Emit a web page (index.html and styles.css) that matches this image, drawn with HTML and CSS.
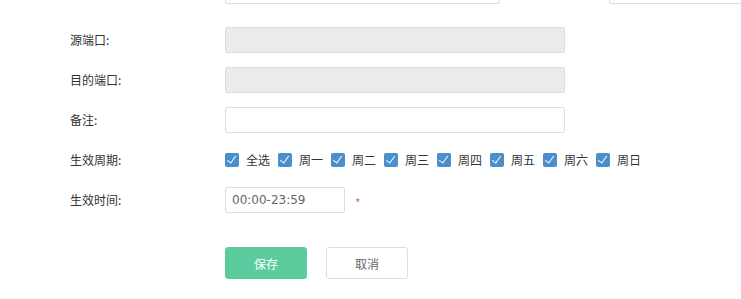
FILE: index.html
```html
<!DOCTYPE html>
<html lang="zh-CN">
<head>
    <meta charset="UTF-8">
    <title>端口规则</title>
    <link rel="stylesheet" href="styles.css">
</head>
<body>

<div class="form">
    <div class="row row-top">
        <input type="text" class="input input-top" />
        <input type="text" class="input input-side" />
    </div>

    <div class="row">
        <label class="label">源端口:</label>
        <input type="text" class="input input-wide" disabled />
    </div>

    <div class="row">
        <label class="label">目的端口:</label>
        <input type="text" class="input input-wide" disabled />
    </div>

    <div class="row">
        <label class="label">备注:</label>
        <input type="text" class="input input-wide" />
    </div>

    <div class="row row-week">
        <label class="label">生效周期:</label>
        <div class="week">
            <span class="check"><i class="box"></i>全选</span>
            <span class="check"><i class="box"></i>周一</span>
            <span class="check"><i class="box"></i>周二</span>
            <span class="check"><i class="box"></i>周三</span>
            <span class="check"><i class="box"></i>周四</span>
            <span class="check"><i class="box"></i>周五</span>
            <span class="check"><i class="box"></i>周六</span>
            <span class="check"><i class="box"></i>周日</span>
        </div>
    </div>

    <div class="row row-time">
        <label class="label">生效时间:</label>
        <input type="text" class="input input-time" value="00:00-23:59" />
        <span class="required">*</span>
    </div>

    <div class="buttons">
        <button class="btn btn-save">保存</button>
        <button class="btn btn-cancel">取消</button>
    </div>
</div>

</body>
</html>
```

FILE: styles.css
```css
body {
    margin: 0;
    background-color: #fff;
    font-family: "Noto Sans CJK SC", "Noto Sans", sans-serif;
    font-size: 12px;
    color: #333;
    overflow: hidden;
}
.form {
    margin-top: -22px;
}
.row {
    display: flex;
    align-items: center;
    height: 25px;
    margin-bottom: 15px;
}
.row-top {
    margin-bottom: 24px;
    padding-left: 225px;
}
.label {
    width: 225px;
    padding-left: 70px;
    box-sizing: border-box;
    flex-shrink: 0;
}
.input {
    box-sizing: border-box;
    flex-shrink: 0;
    height: 26px;
    border: 1px solid #ddd;
    border-radius: 2px;
    background-color: #fff;
    padding: 0 6px;
    font-family: "DejaVu Sans", sans-serif;
    font-size: 12px;
    color: #666;
    outline: none;
}
.input:disabled {
    background-color: #ebebeb;
}
.input-top {
    width: 275px;
}
.input-side {
    width: 160px;
    margin-left: 109px;
}
.input-wide {
    width: 340px;
}
.row-week {
    margin-top: 7px;
    margin-bottom: 15px;
}
.week {
    display: flex;
}
.check {
    display: flex;
    align-items: center;
    width: 53px;
    color: #333;
}
.box {
    position: relative;
    width: 14px;
    height: 14px;
    border-radius: 2px;
    background-color: #4a8ecb;
    margin-right: 7px;
}
.box::after {
    content: "";
    position: absolute;
    left: 4px;
    top: 1px;
    width: 4px;
    height: 8px;
    border: solid #fff;
    border-width: 0 1.5px 1.5px 0;
    transform: rotate(35deg);
}
.input-time {
    width: 120px;
    padding-left: 6px;
}
.required {
    margin-left: 10px;
    padding-top: 6px;
    color: #c9727e;
    font-size: 12px;
}
.buttons {
    display: flex;
    gap: 19px;
    padding-left: 225px;
    margin-top: 35px;
}
.btn {
    width: 82px;
    height: 32px;
    border-radius: 3px;
    font-family: "Noto Sans CJK SC", sans-serif;
    font-size: 12px;
    cursor: pointer;
}
.btn-save {
    background-color: #5ccb9e;
    border: 1px solid #5ccb9e;
    color: #fff;
}
.btn-cancel {
    background-color: #fff;
    border: 1px solid #ddd;
    color: #666;
}
```
